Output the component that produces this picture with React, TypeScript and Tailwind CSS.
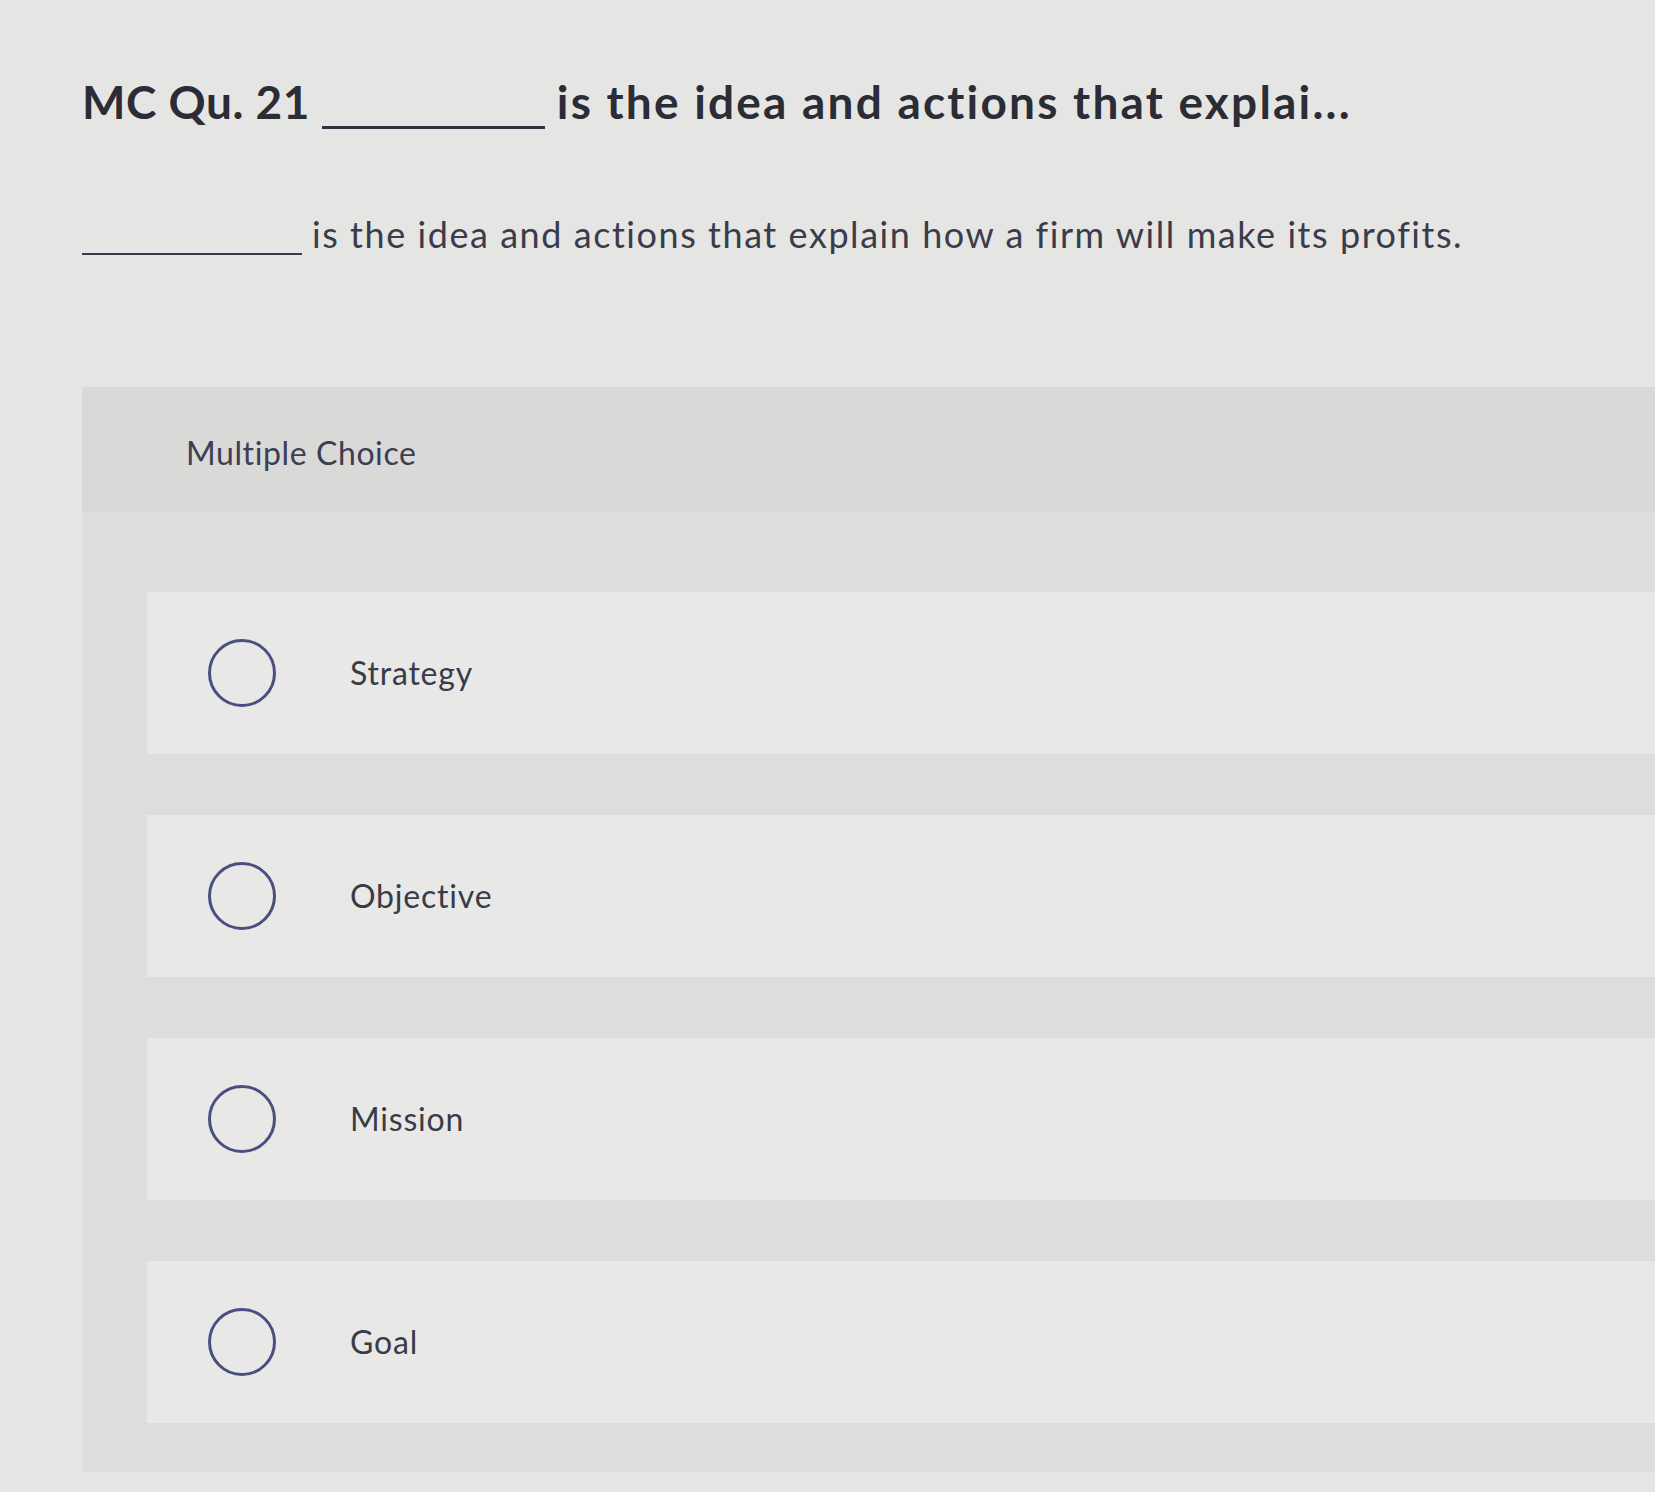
const options = ['Strategy', 'Objective', 'Mission', 'Goal'];

function RadioCircle() {
  return <span className="block w-[68px] h-[68px] shrink-0 rounded-full border-[3px] border-[#4a4e80]" />;
}

export default function App() {
  return (
    <div
      className="min-h-[1492px] w-full overflow-hidden bg-[#e5e6e4] text-[#33343f]"
      style={{ fontFamily: 'Lato, "Open Sans", sans-serif', fontVariantLigatures: 'none' }}
    >
      <div className="pl-[82px] pt-[79px]">
        <h1 className="flex items-end text-[46px] leading-none font-bold text-[#2b2c36] whitespace-nowrap">
          <span className="tracking-[0.5px]">MC Qu. 21</span>
          <span className="mx-[12px] mb-[-4px] inline-block w-[223px] border-b-[3px] border-[#2f3040]" />
          <span className="tracking-[2.2px]">is the idea and actions that explai...</span>
        </h1>

        <p className="mt-[91px] flex items-end text-[36px] leading-none text-[#3c3b4c] whitespace-nowrap">
          <span className="mr-[10px] mb-[-3px] inline-block w-[220px] border-b-2 border-[#3a3b4a]" />
          <span className="tracking-[1.55px]">
            is the idea and actions that explain how a firm will make its profits.
          </span>
        </p>

        <section className="mt-[135px] bg-[#dddedc]">
          <div className="h-[125px] flex items-center pl-[104px] pt-[6px] bg-[#d9dad8]">
            <span className="text-[32px] leading-none tracking-[0.6px] text-[#3d3e52]">Multiple Choice</span>
          </div>

          <div className="flex flex-col gap-[61px] pt-[80px] pb-[49px] pl-[65px]">
            {options.map((label) => (
              <label
                key={label}
                className="h-[162px] flex items-center pl-[61px] bg-[#e8e9e7] cursor-pointer"
              >
                <RadioCircle />
                <span className="ml-[74px] text-[32px] leading-none tracking-[0.8px] text-[#3a3b48]">
                  {label}
                </span>
              </label>
            ))}
          </div>
        </section>
      </div>
    </div>
  );
}
